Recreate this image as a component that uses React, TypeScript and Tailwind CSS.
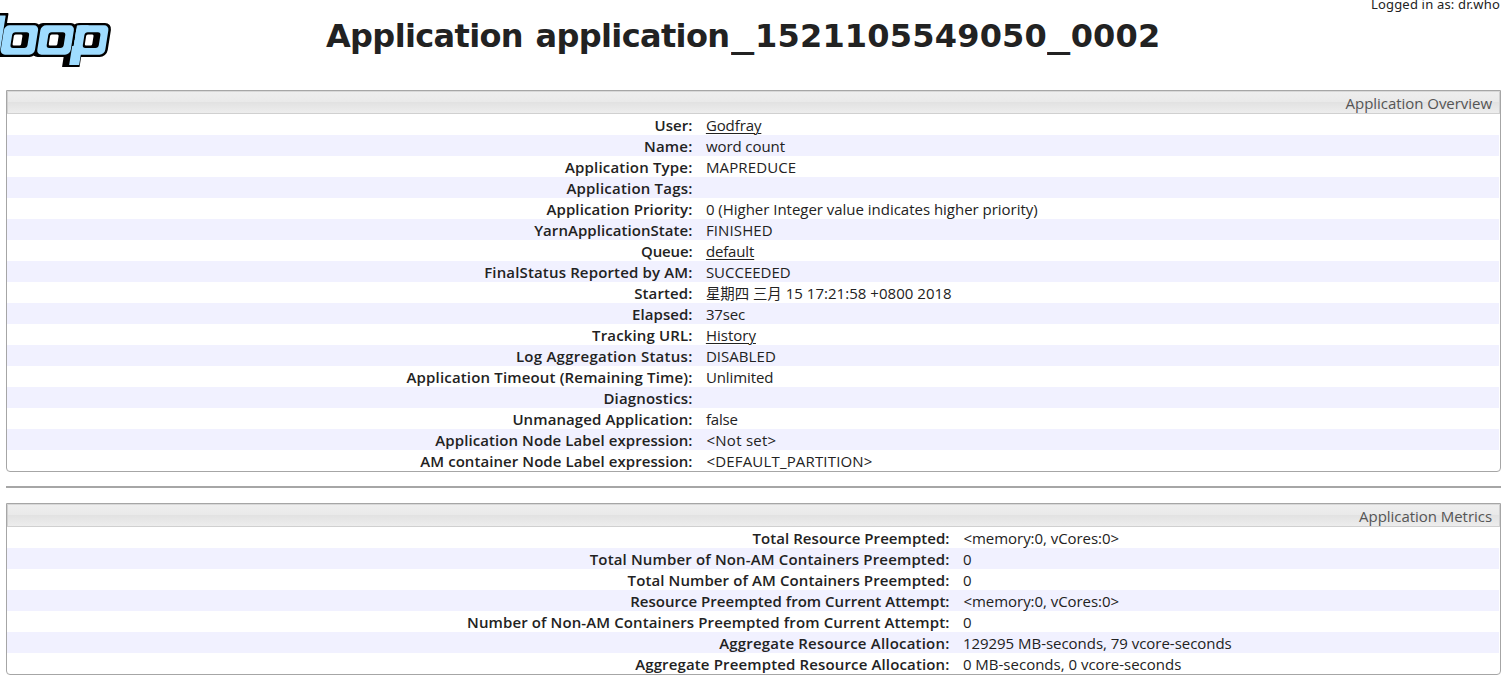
import type { ReactNode } from "react";
import clsx from "clsx";

type Row = { label: string; labelClass: string; value?: ReactNode; valueClass?: string };

const overviewRows: Row[] = [
  { label: "User:", labelClass: "tracking-[0.05px]", value: <Link>Godfray</Link>, valueClass: "tracking-[-0.1px]" },
  { label: "Name:", labelClass: "tracking-[0.2px]", value: "word count", valueClass: "tracking-[-0.08px]" },
  { label: "Application Type:", labelClass: "tracking-[0.19px]", value: "MAPREDUCE", valueClass: "tracking-[0.14px]" },
  { label: "Application Tags:", labelClass: "tracking-[0.2px]" },
  {
    label: "Application Priority:",
    labelClass: "tracking-[0.12px]",
    value: "0 (Higher Integer value indicates higher priority)",
    valueClass: "tracking-[-0.02px]",
  },
  { label: "YarnApplicationState:", labelClass: "tracking-[0.06px]", value: "FINISHED", valueClass: "tracking-[0.12px]" },
  { label: "Queue:", labelClass: "tracking-[-0.12px]", value: <Link>default</Link>, valueClass: "tracking-[-0.14px]" },
  { label: "FinalStatus Reported by AM:", labelClass: "tracking-[0.15px]", value: "SUCCEEDED" },
  {
    label: "Started:",
    labelClass: "tracking-[0.12px]",
    value: (
      <>
        <span className="text-[14.4px]">星期四 三月</span> 15 17:21:58 +0800 2018
      </>
    ),
    valueClass: "tracking-[0.03px]",
  },
  { label: "Elapsed:", labelClass: "tracking-[0.05px]", value: "37sec", valueClass: "tracking-[-0.15px]" },
  { label: "Tracking URL:", labelClass: "tracking-[0.14px]", value: <Link>History</Link> },
  { label: "Log Aggregation Status:", labelClass: "tracking-[0.26px]", value: "DISABLED", valueClass: "tracking-[0.05px]" },
  { label: "Application Timeout (Remaining Time):", labelClass: "tracking-[0.16px]", value: "Unlimited", valueClass: "tracking-[-0.1px]" },
  { label: "Diagnostics:", labelClass: "tracking-[0.16px]" },
  { label: "Unmanaged Application:", labelClass: "tracking-[0.09px]", value: "false", valueClass: "tracking-[-0.15px]" },
  { label: "Application Node Label expression:", labelClass: "tracking-[0.08px]", value: "<Not set>", valueClass: "pl-[14px] tracking-[0.25px]" },
  {
    label: "AM container Node Label expression:",
    labelClass: "tracking-[0.07px]",
    value: "<DEFAULT_PARTITION>",
    valueClass: "pl-[14px] tracking-[0.17px]",
  },
];

const metricsRows: Row[] = [
  { label: "Total Resource Preempted:", labelClass: "tracking-[0.05px]", value: "<memory:0, vCores:0>", valueClass: "pl-[14px] tracking-[-0.05px]" },
  { label: "Total Number of Non-AM Containers Preempted:", labelClass: "tracking-[0.15px]", value: "0" },
  { label: "Total Number of AM Containers Preempted:", labelClass: "tracking-[0.1px]", value: "0" },
  { label: "Resource Preempted from Current Attempt:", labelClass: "tracking-[0.02px]", value: "<memory:0, vCores:0>", valueClass: "pl-[14px] tracking-[-0.05px]" },
  { label: "Number of Non-AM Containers Preempted from Current Attempt:", labelClass: "tracking-[0.11px]", value: "0" },
  {
    label: "Aggregate Resource Allocation:",
    labelClass: "tracking-[0.2px]",
    value: "129295 MB-seconds, 79 vcore-seconds",
    valueClass: "tracking-[-0.03px]",
  },
  { label: "Aggregate Preempted Resource Allocation:", labelClass: "tracking-[0.14px]", value: "0 MB-seconds, 0 vcore-seconds" },
];

function Link({ children }: { children: ReactNode }) {
  return (
    <a href="#" className="underline decoration-1 underline-offset-2">
      {children}
    </a>
  );
}

function Logo() {
  return (
    <svg width="120" height="72" viewBox="0 0 120 72" className="block shrink-0">
      {/* Slanted mark; the skew pivots on y = 54.7 */}
      <g transform="translate(8.66 0) skewX(-9)">
        {/* black outline and extrusion */}
        <rect x="-20" y="13" width="22" height="43.5" rx="1" />
        <rect x="-6" y="23" width="42" height="34" rx="6" />
        <rect x="32" y="23" width="40" height="34" rx="6" />
        <rect x="67" y="23" width="40" height="34" rx="7" />
        <rect x="64" y="40" width="17.5" height="27" rx="0.5" />
        {/* blue faces */}
        <g fill="#9fdcff">
          <rect x="-16" y="15.5" width="15.5" height="39" rx="0.5" />
          <rect x="0" y="25.3" width="34.2" height="29.4" rx="5" />
          <rect x="36.5" y="25.3" width="33.5" height="29.4" rx="5" />
          <rect x="72.3" y="25.3" width="32.2" height="29.4" rx="5" />
          <rect x="72.3" y="25.3" width="12" height="12" rx="1" />
          <rect x="70.8" y="46" width="10" height="19" />
          <rect x="72.3" y="40" width="9" height="12" />
        </g>
        {/* counters */}
        <rect x="9" y="32.3" width="17" height="15.7" rx="3" />
        <rect x="45.2" y="32.3" width="17" height="15.7" rx="3" />
        <rect x="81.3" y="32.3" width="16" height="15.7" rx="3" />
        <g fill="#fff">
          <rect x="10.9" y="34.6" width="8.6" height="11" rx="1.5" />
          <rect x="47.1" y="34.6" width="8.6" height="11" rx="1.5" />
          <rect x="83.2" y="34.6" width="7.4" height="11" rx="1.5" />
        </g>
      </g>
    </svg>
  );
}

function Underscore() {
  return (
    <span className="inline-block w-[23.6px]">
      <span className="inline-block origin-left scale-x-[1.45]">_</span>
    </span>
  );
}

function InfoPanel({ title, rows, labelWidth }: { title: string; rows: Row[]; labelWidth: string }) {
  return (
    <section className="rounded-b-[4px] border border-[#a6a6a6]">
      <h2 className="h-[23px] border border-[#d0d0d0] border-t-[#d8d8d8] bg-[linear-gradient(#eeeeee_0%,#e9e9e9_50%,#e2e2e2_50%,#ededed_100%)] pr-[7px] text-right text-[15px] leading-[22px] tracking-[-0.04px] text-[#555555]">
        {title}
      </h2>
      <dl className="mr-px">
        {rows.map((row, i) => (
          <div key={row.label} className={clsx("flex h-[21px] whitespace-nowrap leading-[22px]", i % 2 === 1 && "bg-[#f1f1ff]")}>
            <dt className={clsx("shrink-0 text-right font-semibold", labelWidth, row.labelClass)}>{row.label}</dt>
            <dd className={clsx(!row.valueClass?.includes("pl-") && "pl-[13.4px]", row.valueClass)}>{row.value}</dd>
          </div>
        ))}
      </dl>
    </section>
  );
}

export default function App() {
  return (
    <div className="h-[684px] overflow-hidden bg-white pr-[9px] pl-[6px] font-['Open_Sans','Noto_Sans_CJK_SC',sans-serif] text-[15px] text-[#222222]">
      <header className="-ml-[6px] flex h-[90px] items-start">
        <Logo />
        <h1 className="ml-[206px] pt-[16px] font-['DejaVu_Sans',sans-serif] text-[32px] leading-[40px] font-bold whitespace-pre">
          <span className="inline-block w-[209.6px] tracking-[-0.65px]">Application </span>
          <span className="inline-block w-[195.8px] tracking-[-0.65px]">application</span>
          <Underscore />
          <span className="tracking-[0.2px]">1521105549050</span>
          <Underscore />
          <span className="tracking-[0.2px]">0002</span>
        </h1>
        <p className="mr-px -mt-[5px] ml-auto font-['Noto_Sans',sans-serif] text-[13px] leading-[18px] tracking-[0.18px] whitespace-nowrap">
          Logged in as: dr.who
        </p>
      </header>
      <main>
        <InfoPanel title="Application Overview" rows={overviewRows} labelWidth="w-[685.5px]" />
        <hr className="mt-[14px] mb-[15px] border-t-2 border-[#a6a6a6]" />
        <InfoPanel title="Application Metrics" rows={metricsRows} labelWidth="w-[942.5px]" />
      </main>
    </div>
  );
}
